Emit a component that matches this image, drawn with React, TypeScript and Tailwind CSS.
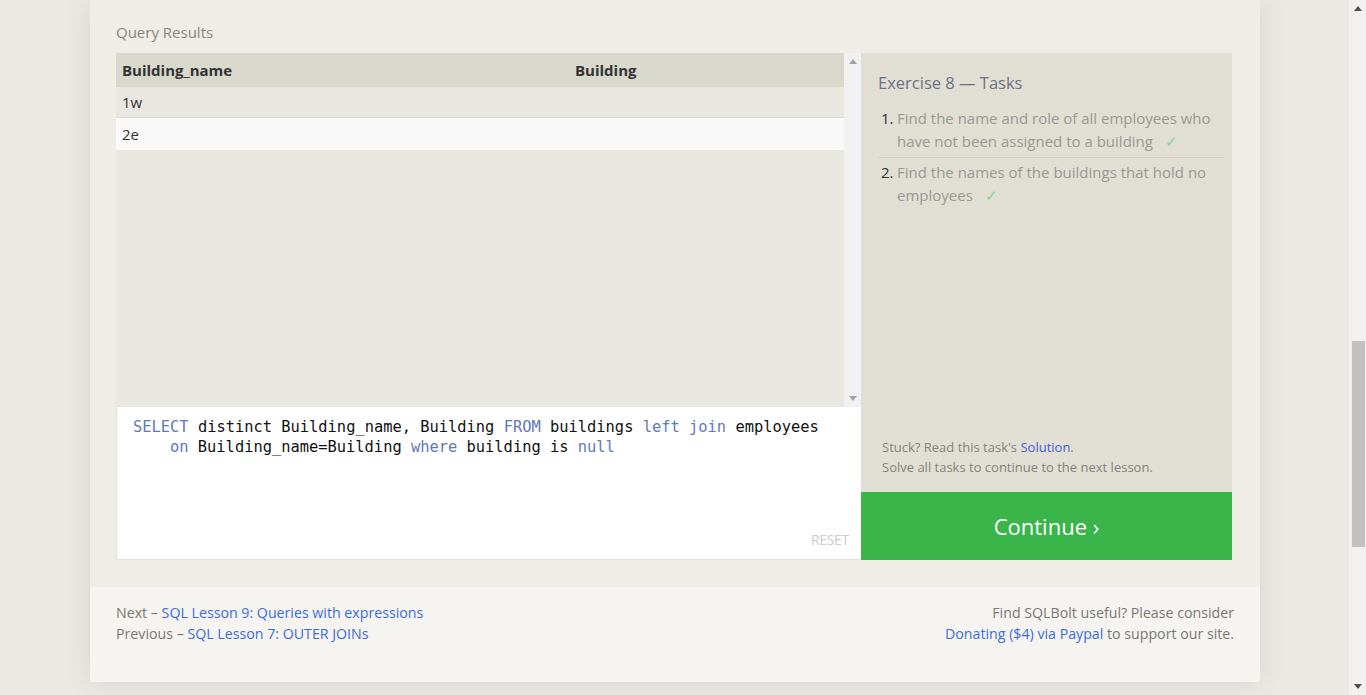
import React from 'react';

const sans = 'font-["Open_Sans","Noto_Sans",sans-serif]';

const tasks = [
  'Find the name and role of all employees who have not been assigned to a building',
  'Find the names of the buildings that hold no employees',
];

const rows = [{ name: '1w', building: '' }, { name: '2e', building: '' }];

function Kw({ children }: { children: React.ReactNode }) {
  return <span className="text-[#6278b8]">{children}</span>;
}

function ArrowUp({ className }: { className: string }) {
  return (
    <svg width="8" height="5" viewBox="0 0 8 5" className={className}>
      <path d="M0 5 L4 0 L8 5 Z" fill="currentColor" />
    </svg>
  );
}

function ArrowDown({ className }: { className: string }) {
  return (
    <svg width="8" height="5" viewBox="0 0 8 5" className={className}>
      <path d="M0 0 L8 0 L4 5 Z" fill="currentColor" />
    </svg>
  );
}

export default function App() {
  return (
    <div className={`flex h-[695px] overflow-hidden bg-[#ece8e4] ${sans}`}>
      <div className="flex-1">
        <div className="ml-[90px] w-[1170px] shadow-[0_0_28px_rgba(0,0,0,0.09)]">
          {/* Exercise area */}
          <div className="bg-[#f0ede6] pl-[26px] pr-[28px] pt-[22px] pb-[27px]">
            <div className="text-[15px] leading-[20px] text-[#888580] mb-[11px]">Query Results</div>
            <div className="flex h-[507px]">
              {/* Left: results + editor */}
              <div className="w-[745px] flex flex-col">
                <div className="flex h-[354px] bg-[#e9e8e0]">
                  <div className="flex-1 text-[15px] text-[#333]">
                    <div className="grid grid-cols-[453px_1fr] h-[34px] items-center bg-[#d9d8cc] font-bold px-[6px]">
                      <div>Building_name</div>
                      <div>Building</div>
                    </div>
                    {rows.map((r, i) => (
                      <div
                        key={r.name}
                        className={`grid grid-cols-[453px_1fr] items-center px-[6px] ${
                          i === 0 ? 'h-[31px] bg-[#e9e8e0] border-b border-[#dcdbd4]' : 'h-[32px] bg-[#f9f9f9]'
                        }`}
                      >
                        <div>{r.name}</div>
                        <div>{r.building}</div>
                      </div>
                    ))}
                  </div>
                  <div className="w-[17px] bg-[#f1f1f1] flex flex-col items-center justify-between py-[6px]">
                    <ArrowUp className="text-[#a3a3a3]" />
                    <ArrowDown className="text-[#a3a3a3]" />
                  </div>
                </div>
                <div className="flex-1 bg-white border-l border-[#e4e2da] border-b pl-[16px] pr-[10px] pt-[10px] flex flex-col">
                  <div className='font-["DejaVu_Sans_Mono",monospace] text-[15.4px] leading-[20px] text-[#111] flex-1'>
                    <div>
                      <Kw>SELECT</Kw> distinct Building_name, Building <Kw>FROM</Kw> buildings <Kw>left</Kw> <Kw>join</Kw> employees
                    </div>
                    <div className="pl-[37px]">
                      <Kw>on</Kw> Building_name=Building <Kw>where</Kw> building is <Kw>null</Kw>
                    </div>
                  </div>
                  <div className="self-end text-[14px] tracking-[-0.3px] text-[#cccccc] pb-[9px] pr-[2px]">RESET</div>
                </div>
              </div>

              {/* Right: tasks */}
              <div className="w-[371px] flex flex-col">
                <div className="flex-1 bg-[#e1dfd4] flex flex-col">
                  <div className="pl-[17px] pr-[8px] pt-[18px] flex-1">
                    <div className="text-[16.5px] leading-[24px] text-[#6b7184]">Exercise 8 — Tasks</div>
                    <ol className="mt-[12px] text-[15px] leading-[23px] text-[#9a9893]">
                      {tasks.map((t, i) => (
                        <li
                          key={t}
                          className={`flex ${i === 0 ? 'border-b border-[#d3d1c6] pb-[4px] mb-[3px]' : ''}`}
                        >
                          <span className="w-[19px] pl-[3px] text-[#333] shrink-0">{i + 1}.</span>
                          <span className="flex-1">
                            {t}
                            <span className="inline-block text-[#8ccf96] ml-[12px]">✓</span>
                          </span>
                        </li>
                      ))}
                    </ol>
                  </div>
                  <div className="pl-[21px] pb-[15px] text-[13px] leading-[20px] text-[#858279]">
                    <div>
                      Stuck? Read this task's <span className="text-[#3f5fd8]">Solution</span>.
                    </div>
                    <div>Solve all tasks to continue to the next lesson.</div>
                  </div>
                </div>
                <div className="h-[68px] bg-[#39b54a] flex items-center justify-center text-white text-[22px]">
                  Continue ›
                </div>
              </div>
            </div>
          </div>

          {/* Footer nav */}
          <div className="bg-[#f5f4f0] h-[95px] pl-[26px] pr-[26px] pt-[15px] flex justify-between text-[14.2px] leading-[21px] text-[#7a7874] rounded-b-[3px]">
            <div>
              <div>
                Next – <span className="text-[#3d6be0]">SQL Lesson 9: Queries with expressions</span>
              </div>
              <div>
                Previous – <span className="text-[#3d6be0]">SQL Lesson 7: OUTER JOINs</span>
              </div>
            </div>
            <div className="text-right">
              <div>Find SQLBolt useful? Please consider</div>
              <div>
                <span className="text-[#3d6be0]">Donating ($4) via Paypal</span> to support our site.
              </div>
            </div>
          </div>
        </div>
      </div>

      {/* Browser scrollbar */}
      <div className="w-[17px] bg-[#f1f1f1] flex flex-col items-center">
        <div className="h-[17px] flex items-center justify-center">
          <ArrowUp className="text-[#505050]" />
        </div>
        <div className="mt-[324px] w-[13px] h-[206px] bg-[#c1c1c1] ml-[2px]" />
        <div className="flex-1" />
        <div className="h-[17px] flex items-center justify-center">
          <ArrowDown className="text-[#505050]" />
        </div>
      </div>
    </div>
  );
}
